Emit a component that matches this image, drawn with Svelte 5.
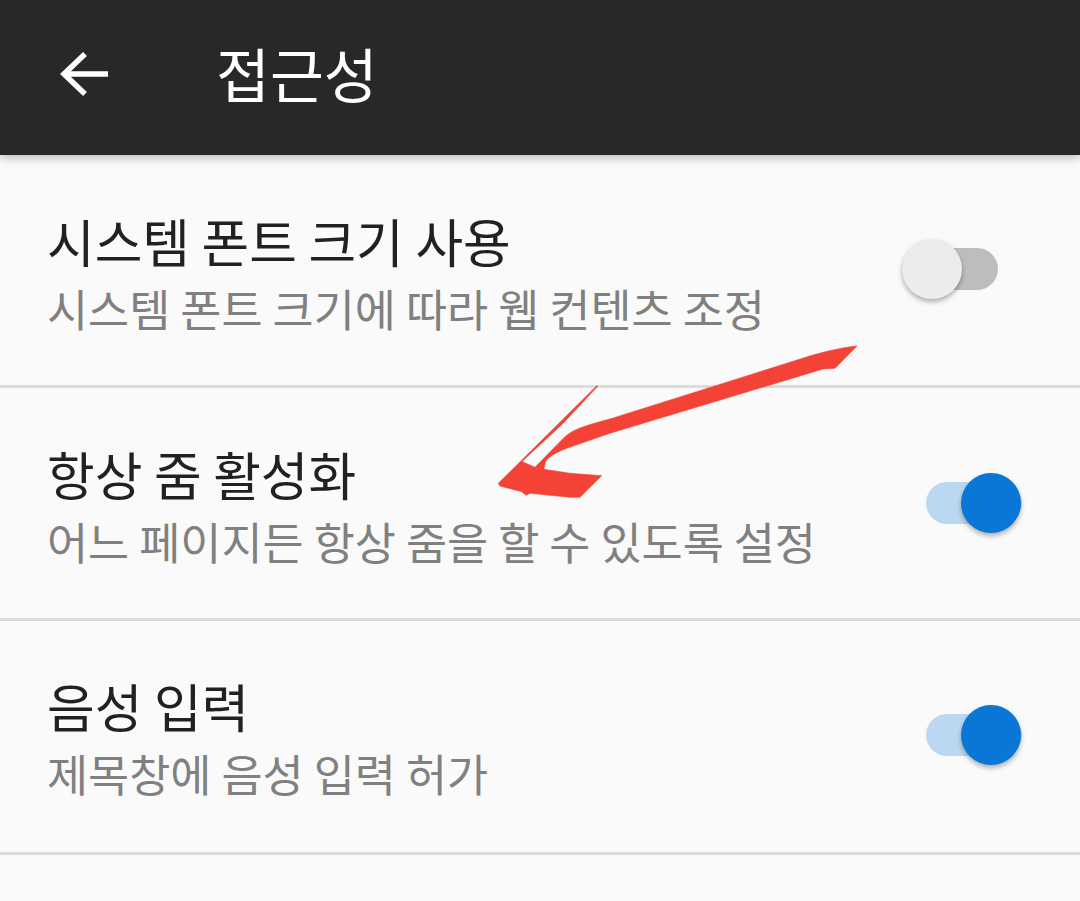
<script>
  const rows = [
    { title: '시스템 폰트 크기 사용', sub: '시스템 폰트 크기에 따라 웹 컨텐츠 조정', on: false },
    { title: '항상 줌 활성화', sub: '어느 페이지든 항상 줌을 할 수 있도록 설정', on: true },
    { title: '음성 입력', sub: '제목창에 음성 입력 허가', on: true }
  ];
</script>

<div class="screen">
  <header class="bar">
    <svg class="back" width="50" height="48" viewBox="0 0 50 48" aria-hidden="true">
      <path d="M48 24H4M25 4 4 24l21 20" fill="none" stroke="#fff" stroke-width="5.500" />
    </svg>
    <h1>접근성</h1>
  </header>
  <main>
    {#each rows as r}
      <section class="row">
        <div class="text">
          <div class="title">{r.title}</div>
          <div class="sub">{r.sub}</div>
        </div>
        <div class="switch" class:on={r.on}>
          <span class="track"></span>
          <span class="thumb"></span>
        </div>
      </section>
    {/each}
  </main>
  <svg class="mark" width="1080" height="901" viewBox="0 0 1080 901" aria-hidden="true">
    <path fill="#f44336" stroke="#f44336" stroke-width="0.600" stroke-linejoin="round" d="M857 346C838 348 825 352 813 355L610 419C598 422 588 425 580 428C572 431 566 435 561.700 440L535 467.300L522 461.500L563 423.500L597.500 386.500L597 385.500L498.300 483.300L500 486L521.700 491.700L526 495.300L530 493.300L570 497.300L580 497.300L601.700 475.700L570 473.300L544 469.300C545 464 545 461 548.300 458.300C553 454 560 451 566.700 448.300L610 433.300L823 369L835 368.300Z" />
  </svg>
</div>

<style>
  :global(body) { margin: 0; background: #fafafa; }
  .screen {
    position: relative;
    width: 1080px;
    height: 901px;
    overflow: hidden;
    background: #fafafa;
    font-family: "Noto Sans CJK KR", "Noto Sans", sans-serif;
  }
  .bar {
    position: relative;
    z-index: 1;
    box-sizing: border-box;
    height: 155px;
    display: flex;
    align-items: center;
    padding: 0 0 8px 60px;
    background: #282828;
    box-shadow: 0 2px 10px rgba(0, 0, 0, 0.3);
  }
  .back { flex: none; }
  h1 {
    margin: 0 0 0 106px;
    color: #fff;
    font-size: 58.600px;
    font-weight: 400;
    line-height: 1;
  }
  .row {
    box-sizing: border-box;
    height: 233px;
    display: flex;
    align-items: center;
    justify-content: space-between;
    padding: 0 58px 0 47px;
    border-bottom: 3px solid #dcdcdc;
  }
  .row:first-child { padding-bottom: 2px; }
  .row:first-child .text { padding-top: 8px; }
  .row:last-child { height: 234px; padding-bottom: 3px; }
  .text { padding-top: 6px; }
  .title {
    color: #212121;
    font-size: 51.800px;
    line-height: 68px;
  }
  .sub {
    color: #808080;
    font-size: 44.700px;
    line-height: 65px;
  }
  .switch {
    position: relative;
    width: 96px;
    height: 62px;
    flex: none;
  }
  .switch:not(.on) { margin-right: 24px; }
  .track {
    position: absolute;
    left: 0;
    top: 10px;
    width: 96px;
    height: 42px;
    border-radius: 21px;
    background: #bdbdbd;
  }
  .thumb {
    position: absolute;
    top: 1px;
    left: 0;
    width: 60px;
    height: 60px;
    border-radius: 50%;
    background: #ececec;
    box-shadow: 0 3px 5px rgba(0, 0, 0, 0.3);
  }
  .switch.on .track { background: #bbd8f2; }
  .switch.on .thumb { left: 35px; background: #0a76d6; }
  .mark {
    position: absolute;
    left: 0;
    top: 0;
    z-index: 2;
    pointer-events: none;
  }
</style>
